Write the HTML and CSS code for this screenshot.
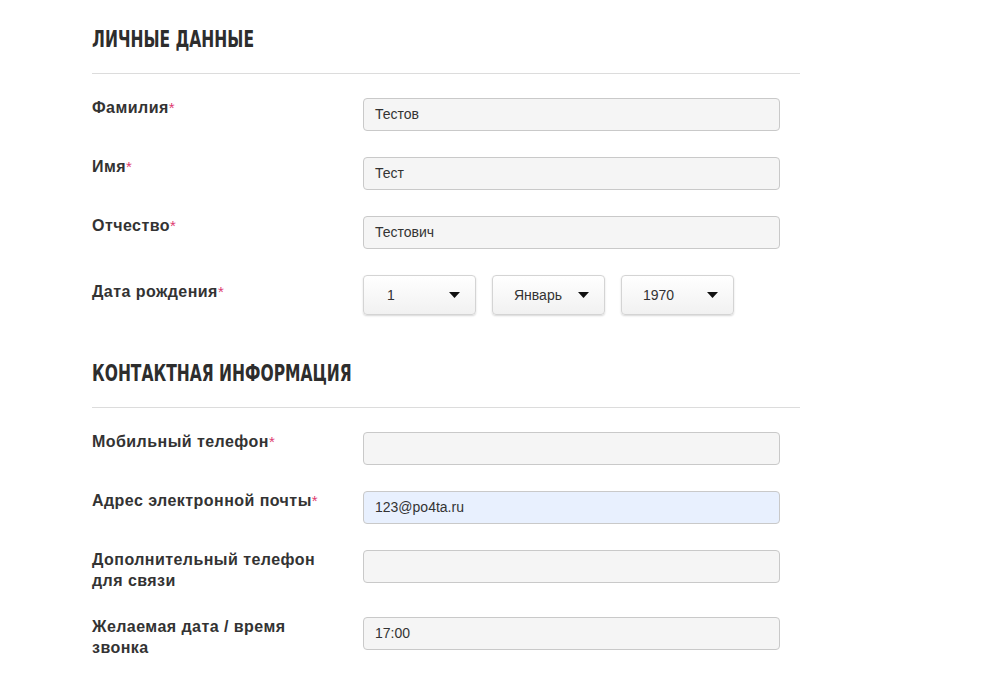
FILE: index.html
```html
<!DOCTYPE html>
<html lang="ru">
<head>
<meta charset="utf-8">
<title>Личные данные</title>
<link rel="stylesheet" href="styles.css">
</head>
<body>
<div class="page">
  <section class="block">
    <h2 class="block-title"><span class="title-text">ЛИЧНЫЕ ДАННЫЕ</span></h2>
    <div class="rows">
      <div class="row">
        <label class="label">Фамилия<span class="req">*</span></label>
        <div class="field"><div class="input">Тестов</div></div>
      </div>
      <div class="row">
        <label class="label">Имя<span class="req">*</span></label>
        <div class="field"><div class="input">Тест</div></div>
      </div>
      <div class="row">
        <label class="label">Отчество<span class="req">*</span></label>
        <div class="field"><div class="input">Тестович</div></div>
      </div>
      <div class="row">
        <label class="label label-date">Дата рождения<span class="req">*</span></label>
        <div class="field selects">
          <div class="select"><span class="sel-text sel-left">1</span><svg class="caret" width="11" height="6" viewBox="0 0 11 6"><path d="M0 0h11L5.5 6z"/></svg></div>
          <div class="select"><span class="sel-text">Январь</span><svg class="caret" width="11" height="6" viewBox="0 0 11 6"><path d="M0 0h11L5.5 6z"/></svg></div>
          <div class="select"><span class="sel-text">1970</span><svg class="caret" width="11" height="6" viewBox="0 0 11 6"><path d="M0 0h11L5.5 6z"/></svg></div>
        </div>
      </div>
    </div>
  </section>
  <section class="block block-contacts">
    <h2 class="block-title"><span class="title-text">КОНТАКТНАЯ ИНФОРМАЦИЯ</span></h2>
    <div class="rows">
      <div class="row">
        <label class="label">Мобильный телефон<span class="req">*</span></label>
        <div class="field"><div class="input"></div></div>
      </div>
      <div class="row">
        <label class="label">Адрес электронной почты<span class="req">*</span></label>
        <div class="field"><div class="input input-autofill">123@po4ta.ru</div></div>
      </div>
      <div class="row">
        <label class="label">Дополнительный телефон для связи</label>
        <div class="field"><div class="input"></div></div>
      </div>
      <div class="row">
        <label class="label">Желаемая дата / время звонка</label>
        <div class="field"><div class="input">17:00</div></div>
      </div>
    </div>
  </section>
</div>
</body>
</html>
```

FILE: styles.css
```css
* { box-sizing: border-box; }
html, body { margin: 0; padding: 0; background: #fff; }
body {
  font-family: "Liberation Sans", Arial, sans-serif;
  color: #333;
}
.page {
  width: 708px;
  margin-left: 92px;
  padding-top: 25px;
}
.block-title {
  margin: 0;
  font-family: "DejaVu Sans Condensed", "DejaVu Sans", sans-serif;
  font-weight: 700;
  font-size: 23px;
  line-height: 28px;
  color: #2d2d2d;
  padding-bottom: 20px;
  border-bottom: 1px solid #dcdcdc;
}
.title-text {
  display: inline-block;
  transform: scaleX(0.75);
  transform-origin: left center;
  white-space: nowrap;
}
.rows {
  display: flex;
  flex-direction: column;
  gap: 26px;
  padding-top: 24px;
}
.block-contacts { margin-top: 44px; }
.row {
  display: grid;
  grid-template-columns: 271px 417px;
}
.label {
  font-size: 16px;
  font-weight: 700;
  letter-spacing: 0.45px;
  line-height: 20.5px;
  color: #333;
  padding-right: 30px;
}
.label-date { padding-top: 7px; }
.req {
  color: #de3a70;
  font-weight: 400;
  font-size: 15px;
}
.input {
  height: 33px;
  border: 1px solid #c9c9c9;
  border-radius: 4px;
  background: #f5f5f5;
  font-size: 14px;
  line-height: 31px;
  padding: 0 11px;
  color: #333;
}
.input-autofill { background: #e8f0fe; }
.selects {
  display: flex;
  gap: 16px;
}
.select {
  width: 113px;
  height: 40px;
  border: 1px solid #d4d4d4;
  border-radius: 4px;
  background: linear-gradient(#ffffff, #f1f1f1);
  box-shadow: 0 1px 2px rgba(0,0,0,0.16);
  display: flex;
  align-items: center;
  justify-content: space-between;
  padding: 0 15px 0 21px;
  font-size: 14px;
  color: #333;
}
.sel-text { flex: 1; }
.sel-left { padding-left: 2px; }
.caret { fill: #111; flex: none; }
```
